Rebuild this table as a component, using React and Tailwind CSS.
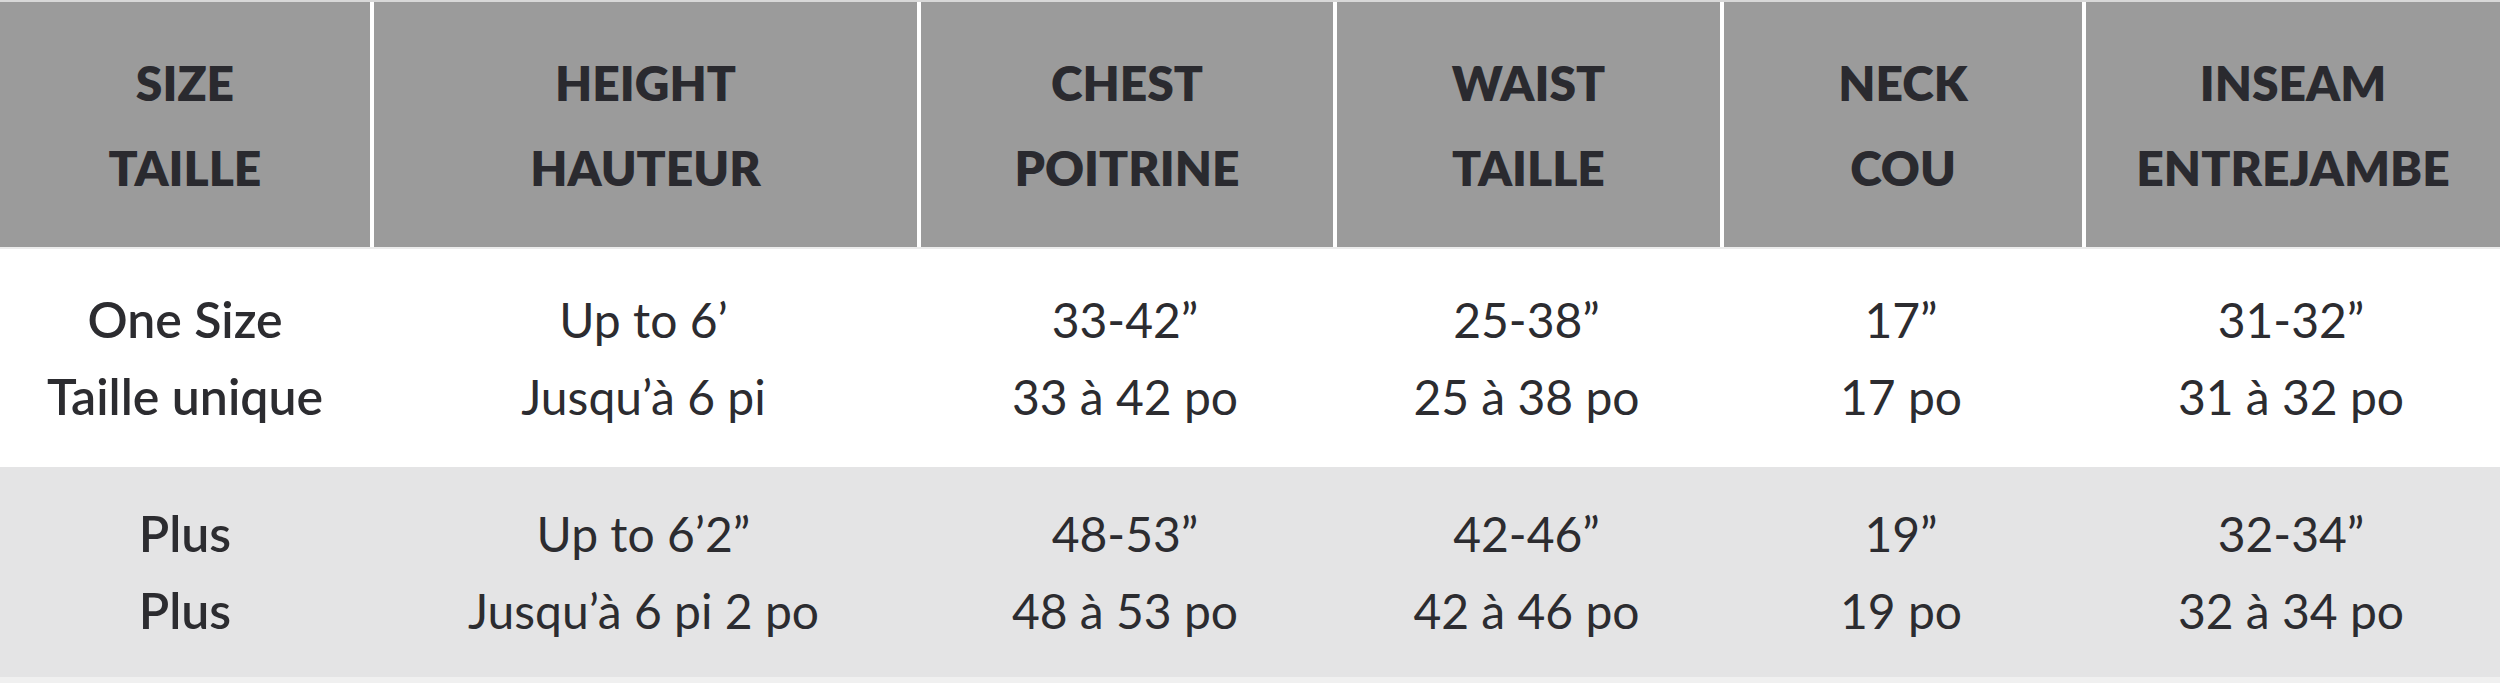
export default function App() {
  const cols = [
    ["SIZE", "TAILLE"],
    ["HEIGHT", "HAUTEUR"],
    ["CHEST", "POITRINE"],
    ["WAIST", "TAILLE"],
    ["NECK", "COU"],
    ["INSEAM", "ENTREJAMBE"],
  ];
  const rows = [
    {
      bg: "bg-white",
      cells: [
        ["One Size", "Taille unique"],
        ["Up to 6’", "Jusqu’à 6 pi"],
        ["33-42”", "33 à 42 po"],
        ["25-38”", "25 à 38 po"],
        ["17”", "17 po"],
        ["31-32”", "31 à 32 po"],
      ],
    },
    {
      bg: "bg-[#e4e4e5]",
      cells: [
        ["Plus", "Plus"],
        ["Up to 6’2”", "Jusqu’à 6 pi 2 po"],
        ["48-53”", "48 à 53 po"],
        ["42-46”", "42 à 46 po"],
        ["19”", "19 po"],
        ["32-34”", "32 à 34 po"],
      ],
    },
  ];
  const grid = "grid grid-cols-[370px_547px_416px_387px_362px_418px]";
  return (
    <div className="w-[2500px] h-[683px] bg-white flex flex-col" style={{ fontFamily: "Lato, 'Open Sans', sans-serif" }}>
      <div className={`${grid} h-[247px] border-t-2 border-[#d8d8d8] bg-[#9b9b9b]`}>
        {cols.map((c, i) => (
          <div
            key={i}
            className={`flex flex-col items-center justify-center text-[48px] leading-[85px] font-extrabold text-[#2a2a2f] ${i > 0 ? "border-l-4 border-white" : ""}`}
          >
            <span>{c[0]}</span>
            <span>{c[1]}</span>
          </div>
        ))}
      </div>
      <div className="h-[2px] bg-[#ececec]" />
      {rows.map((r, ri) => (
        <div key={ri} className={`${grid} ${ri === 0 ? "h-[218px]" : "h-[210px]"} ${r.bg}`}>
          {r.cells.map((c, i) => (
            <div
              key={i}
              className={`flex flex-col items-center justify-center leading-[77px] text-[#2c2c30] ${i === 0 ? "text-[50px] font-semibold" : "text-[48px] font-normal"}`}
            >
              <span>{c[0]}</span>
              <span>{c[1]}</span>
            </div>
          ))}
        </div>
      ))}
      <div className="h-[6px] bg-[#f0f0f0]" />
    </div>
  );
}
